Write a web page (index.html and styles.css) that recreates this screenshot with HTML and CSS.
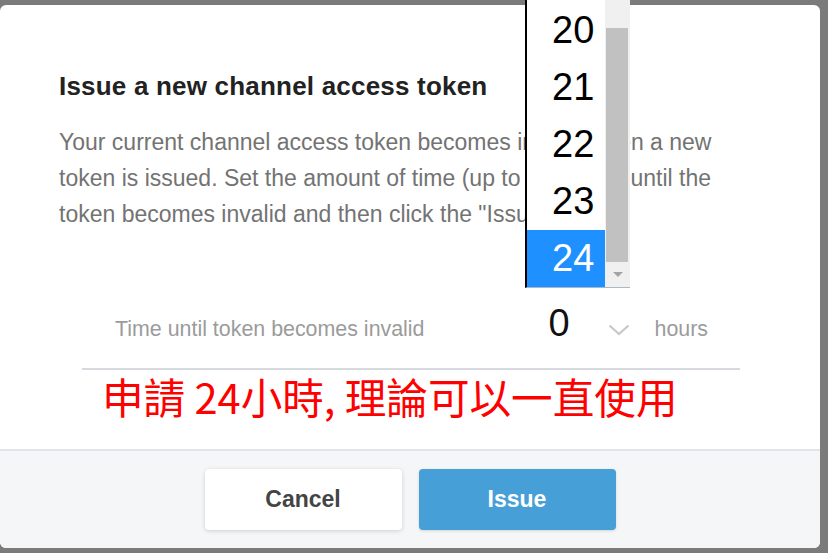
FILE: index.html
```html
<!DOCTYPE html>
<html lang="en">
<head>
<meta charset="utf-8">
<title>Issue a new channel access token</title>
<link rel="stylesheet" href="styles.css">
</head>
<body>
<div class="dialog">
  <div class="content">
    <h2 class="title">Issue a new channel access token</h2>
    <p class="desc">Your current channel access token becomes invalid when a new token is issued. Set the amount of time (up to 24 hours) until the token becomes invalid and then click the "Issue" button.</p>
    <div class="field">
      <span class="label">Time until token becomes invalid</span>
      <div class="select">
        <span class="value">0</span>
        <svg class="chev" width="22" height="12" viewBox="0 0 22 12"><polyline points="1.5,1.5 11,10 20.5,1.5" fill="none" stroke="#c8c8c8" stroke-width="2.2"/></svg>
      </div>
      <span class="unit">hours</span>
    </div>
    <div class="note">申請 24小時, 理論可以一直使用</div>
  </div>
  <div class="footer">
    <button class="btn cancel">Cancel</button>
    <button class="btn primary">Issue</button>
  </div>
</div>
<div class="listbox">
  <div class="options">
    <div class="opt">19</div>
    <div class="opt">20</div>
    <div class="opt">21</div>
    <div class="opt">22</div>
    <div class="opt">23</div>
    <div class="opt sel">24</div>
  </div>
  <div class="scrollbar">
    <div class="track-top"></div>
    <div class="thumb"></div>
    <div class="arrow"><svg width="12" height="7" viewBox="0 0 12 7"><polygon points="1,1 11,1 6,6" fill="#a3a3a3"/></svg></div>
  </div>
</div>
</body>
</html>
```

FILE: styles.css
```css
html, body {
  margin: 0;
  padding: 0;
}
body {
  position: relative;
  width: 828px;
  height: 553px;
  overflow: hidden;
  background: #7b7b7b;
  font-family: "Liberation Sans", Arial, sans-serif;
}
.dialog {
  margin-top: 5px;
  width: 820px;
  height: 543px;
  background: #fff;
  border-radius: 6px;
  display: flex;
  flex-direction: column;
  overflow: hidden;
}
.content {
  flex: 1;
  padding: 65px 59px 0 59px;
}
.title {
  margin: 0;
  font-size: 26px;
  line-height: 32px;
  font-weight: bold;
  letter-spacing: 0.2px;
  color: #222;
}
.desc {
  margin: 22px 0 0;
  font-size: 23px;
  line-height: 36px;
  color: #737373;
}
.field {
  margin: 71px 21px 0 23px;
  padding: 0 32px 25px 33px;
  display: flex;
  align-items: baseline;
  border-bottom: 2px solid #d6d9dd;
}
.label {
  flex: 1;
  font-size: 21.4px;
  line-height: 24px;
  color: #9b9b9b;
}
.select {
  width: 105px;
  display: flex;
  align-items: baseline;
}
.value {
  padding-left: 24px;
  font-size: 38px;
  line-height: 40px;
  color: #111;
}
.chev {
  margin-left: auto;
  margin-right: -1px;
  margin-bottom: 5px;
}
.unit {
  margin-left: 25px;
  font-size: 21.4px;
  line-height: 24px;
  color: #9b9b9b;
}
.note {
  margin: 2px 0 0 43px;
  font-family: "Noto Sans CJK TC", "Noto Sans CJK SC", sans-serif;
  font-size: 41.6px;
  line-height: 48px;
  color: #ff0000;
  white-space: nowrap;
}
.footer {
  box-sizing: border-box;
  height: 99px;
  border-top: 2px solid #e0e3e8;
  background: #f5f6f8;
  display: flex;
  justify-content: center;
  gap: 17px;
  padding-top: 18px;
}
.btn {
  width: 197px;
  height: 61px;
  border: 0;
  border-radius: 4px;
  font-family: "Liberation Sans", Arial, sans-serif;
  font-weight: bold;
  font-size: 23px;
}
.cancel {
  background: #fff;
  color: #444;
  box-shadow: 0 1px 4px rgba(0, 0, 0, 0.16);
}
.primary {
  background: #479fd8;
  color: #fff;
  box-shadow: 0 1px 3px rgba(0, 0, 0, 0.14);
}
.listbox {
  position: absolute;
  left: 525px;
  top: -55px;
  height: 342px;
  display: flex;
  background: #fff;
  border-left: 2px solid #000;
  border-bottom: 1px solid #a8b8cc;
}
.options {
  width: 78px;
}
.opt {
  height: 57px;
  line-height: 57px;
  padding-left: 25px;
  font-size: 38px;
  color: #000;
}
.opt.sel {
  background: #1e90ff;
  color: #fff;
}
.scrollbar {
  width: 25px;
  background: #f0f0f0;
  display: flex;
  flex-direction: column;
}
.track-top {
  height: 83px;
}
.thumb {
  height: 234px;
  margin: 0 2px 0 1px;
  background: #c1c1c1;
}
.arrow {
  flex: 1;
  display: flex;
  align-items: center;
  justify-content: center;
}
```
